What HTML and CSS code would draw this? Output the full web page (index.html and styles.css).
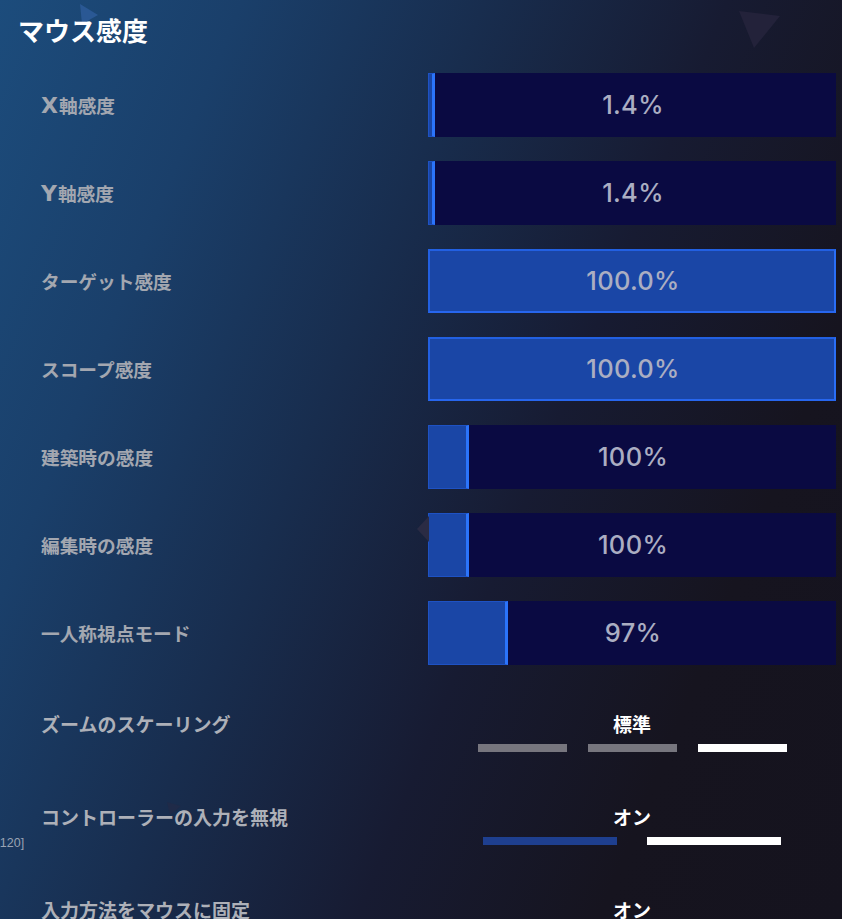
FILE: index.html
```html
<!DOCTYPE html>
<html lang="ja">
<head>
<meta charset="utf-8">
<title>マウス感度</title>
<link rel="stylesheet" href="styles.css">
</head>
<body>
<div class="page">
  <svg class="deco deco-title" width="20" height="22" viewBox="0 0 20 22"><polygon points="0,0 18,11 2,20" fill="#2a5894"/></svg>
  <svg class="deco deco-top" width="44" height="40" viewBox="0 0 44 40"><polygon points="0,0 41,5 15,37" fill="#23223a"/></svg>
  <svg class="deco deco-mid" width="12" height="26" viewBox="0 0 12 26"><polygon points="12,0 0,13 12,26" fill="#2a2b44"/></svg>
  <svg class="deco deco-low" width="16" height="14" viewBox="0 0 16 14"><polygon points="0,0 14,4 3,13" fill="#1f2a48"/></svg>
  <span class="stray">’120]</span>

  <h1 class="title">マウス感度</h1>

  <div class="sliders">
    <div class="row">
      <div class="label"><span class="latin">X</span>軸感度</div>
      <div class="slider">
        <div class="fill" style="width:7px"></div>
        <div class="value">1.4%</div>
      </div>
    </div>
    <div class="row">
      <div class="label"><span class="latin">Y</span>軸感度</div>
      <div class="slider">
        <div class="fill" style="width:7px"></div>
        <div class="value">1.4%</div>
      </div>
    </div>
    <div class="row">
      <div class="label">ターゲット感度</div>
      <div class="slider">
        <div class="fill full"></div>
        <div class="value">100.0%</div>
      </div>
    </div>
    <div class="row">
      <div class="label">スコープ感度</div>
      <div class="slider">
        <div class="fill full"></div>
        <div class="value">100.0%</div>
      </div>
    </div>
    <div class="row">
      <div class="label">建築時の感度</div>
      <div class="slider">
        <div class="fill" style="width:41px"></div>
        <div class="value">100%</div>
      </div>
    </div>
    <div class="row">
      <div class="label">編集時の感度</div>
      <div class="slider">
        <div class="fill" style="width:41px"></div>
        <div class="value">100%</div>
      </div>
    </div>
    <div class="row">
      <div class="label">一人称視点モード</div>
      <div class="slider">
        <div class="fill" style="width:80px"></div>
        <div class="value">97%</div>
      </div>
    </div>
  </div>

  <div class="options">
    <div class="opt-row">
      <div class="opt-label">ズームのスケーリング</div>
      <div class="opt-control">
        <div class="opt-value">標準</div>
        <div class="segs three">
          <span class="seg gray"></span>
          <span class="seg gray"></span>
          <span class="seg white"></span>
        </div>
      </div>
    </div>
    <div class="opt-row">
      <div class="opt-label">コントローラーの入力を無視</div>
      <div class="opt-control">
        <div class="opt-value">オン</div>
        <div class="segs two">
          <span class="seg blue"></span>
          <span class="seg white"></span>
        </div>
      </div>
    </div>
    <div class="opt-row">
      <div class="opt-label">入力方法をマウスに固定</div>
      <div class="opt-control">
        <div class="opt-value">オン</div>
      </div>
    </div>
  </div>
</div>
</body>
</html>
```

FILE: styles.css
```css
* { box-sizing: border-box; }

html, body {
  margin: 0;
  padding: 0;
  background: #15131f;
}

.page {
  position: relative;
  width: 842px;
  height: 919px;
  overflow: hidden;
  font-family: "Noto Sans CJK JP", "Noto Sans", sans-serif;
  background:
    linear-gradient(112deg, #1c4c7c 0%, #1a3f6a 20%, #182d4e 40%, #171b32 60%, #16141f 80%, #15131e 100%);
}

.deco { position: absolute; }
.deco-title { left: 80px; top: 4px; }
.deco-top { left: 739px; top: 11px; }
.deco-mid { left: 417px; top: 516px; }
.deco-low { left: 167px; top: 802px; }

.stray {
  position: absolute;
  left: -3px;
  top: 836px;
  font-family: "Liberation Sans", sans-serif;
  font-size: 12.5px;
  color: #9aa3b3;
}

.title {
  position: relative;
  margin: 0;
  padding: 12px 0 0 18px;
  font-size: 26px;
  line-height: 36px;
  font-weight: 700;
  color: #ffffff;
}

.sliders {
  margin-top: 25px;
  display: flex;
  flex-direction: column;
  gap: 24px;
}

.row {
  display: grid;
  grid-template-columns: 428px 408px;
  align-items: center;
  height: 64px;
}

.label {
  padding-left: 41px;
  font-size: 18.7px;
  font-weight: 700;
  color: #a3a7b0;
  line-height: 24px;
}

.latin {
  font-family: "DejaVu Sans", sans-serif;
  font-weight: 700;
  font-size: 22px;
  margin-right: 1px;
}

.slider {
  display: grid;
  height: 64px;
  background: #0a0a42;
}

.fill,
.value {
  grid-area: 1 / 1;
}

.fill {
  height: 64px;
  background: #1a46a6;
  border: 1px solid #1e52c4;
  border-right: 3px solid #2b74fb;
}

.fill.full {
  width: 100%;
  border: 2px solid #2260e2;
  border-right-color: #2a6ef6;
  border-bottom-color: #2766ee;
}

.value {
  align-self: center;
  justify-self: center;
  font-family: Inter, "Noto Sans", sans-serif;
  font-size: 25.5px;
  font-weight: 500;
  letter-spacing: 0.3px;
  color: #abaec2;
  line-height: 30px;
  padding-left: 2px;
}

.options {
  margin-top: 47px;
  display: flex;
  flex-direction: column;
  gap: 53px;
}

.opt-row {
  display: grid;
  grid-template-columns: 428px 408px;
  align-items: start;
}

.opt-label {
  padding-left: 41px;
  font-size: 19px;
  font-weight: 700;
  color: #adb0b8;
  line-height: 24px;
}

.opt-control {
  display: flex;
  flex-direction: column;
  align-items: center;
  gap: 8px;
}

.opt-value {
  font-size: 19px;
  font-weight: 700;
  color: #ffffff;
  line-height: 24px;
}

.segs {
  display: flex;
  height: 8px;
}

.segs.three { gap: 21px; }
.segs.three .seg { width: 89px; }

.segs.two { gap: 30px; }
.segs.two .seg { width: 134px; }

.seg { height: 8px; display: block; }
.seg.gray { background: #77767e; }
.seg.white { background: #ffffff; }
.seg.blue { background: #1e3f8f; }
```
